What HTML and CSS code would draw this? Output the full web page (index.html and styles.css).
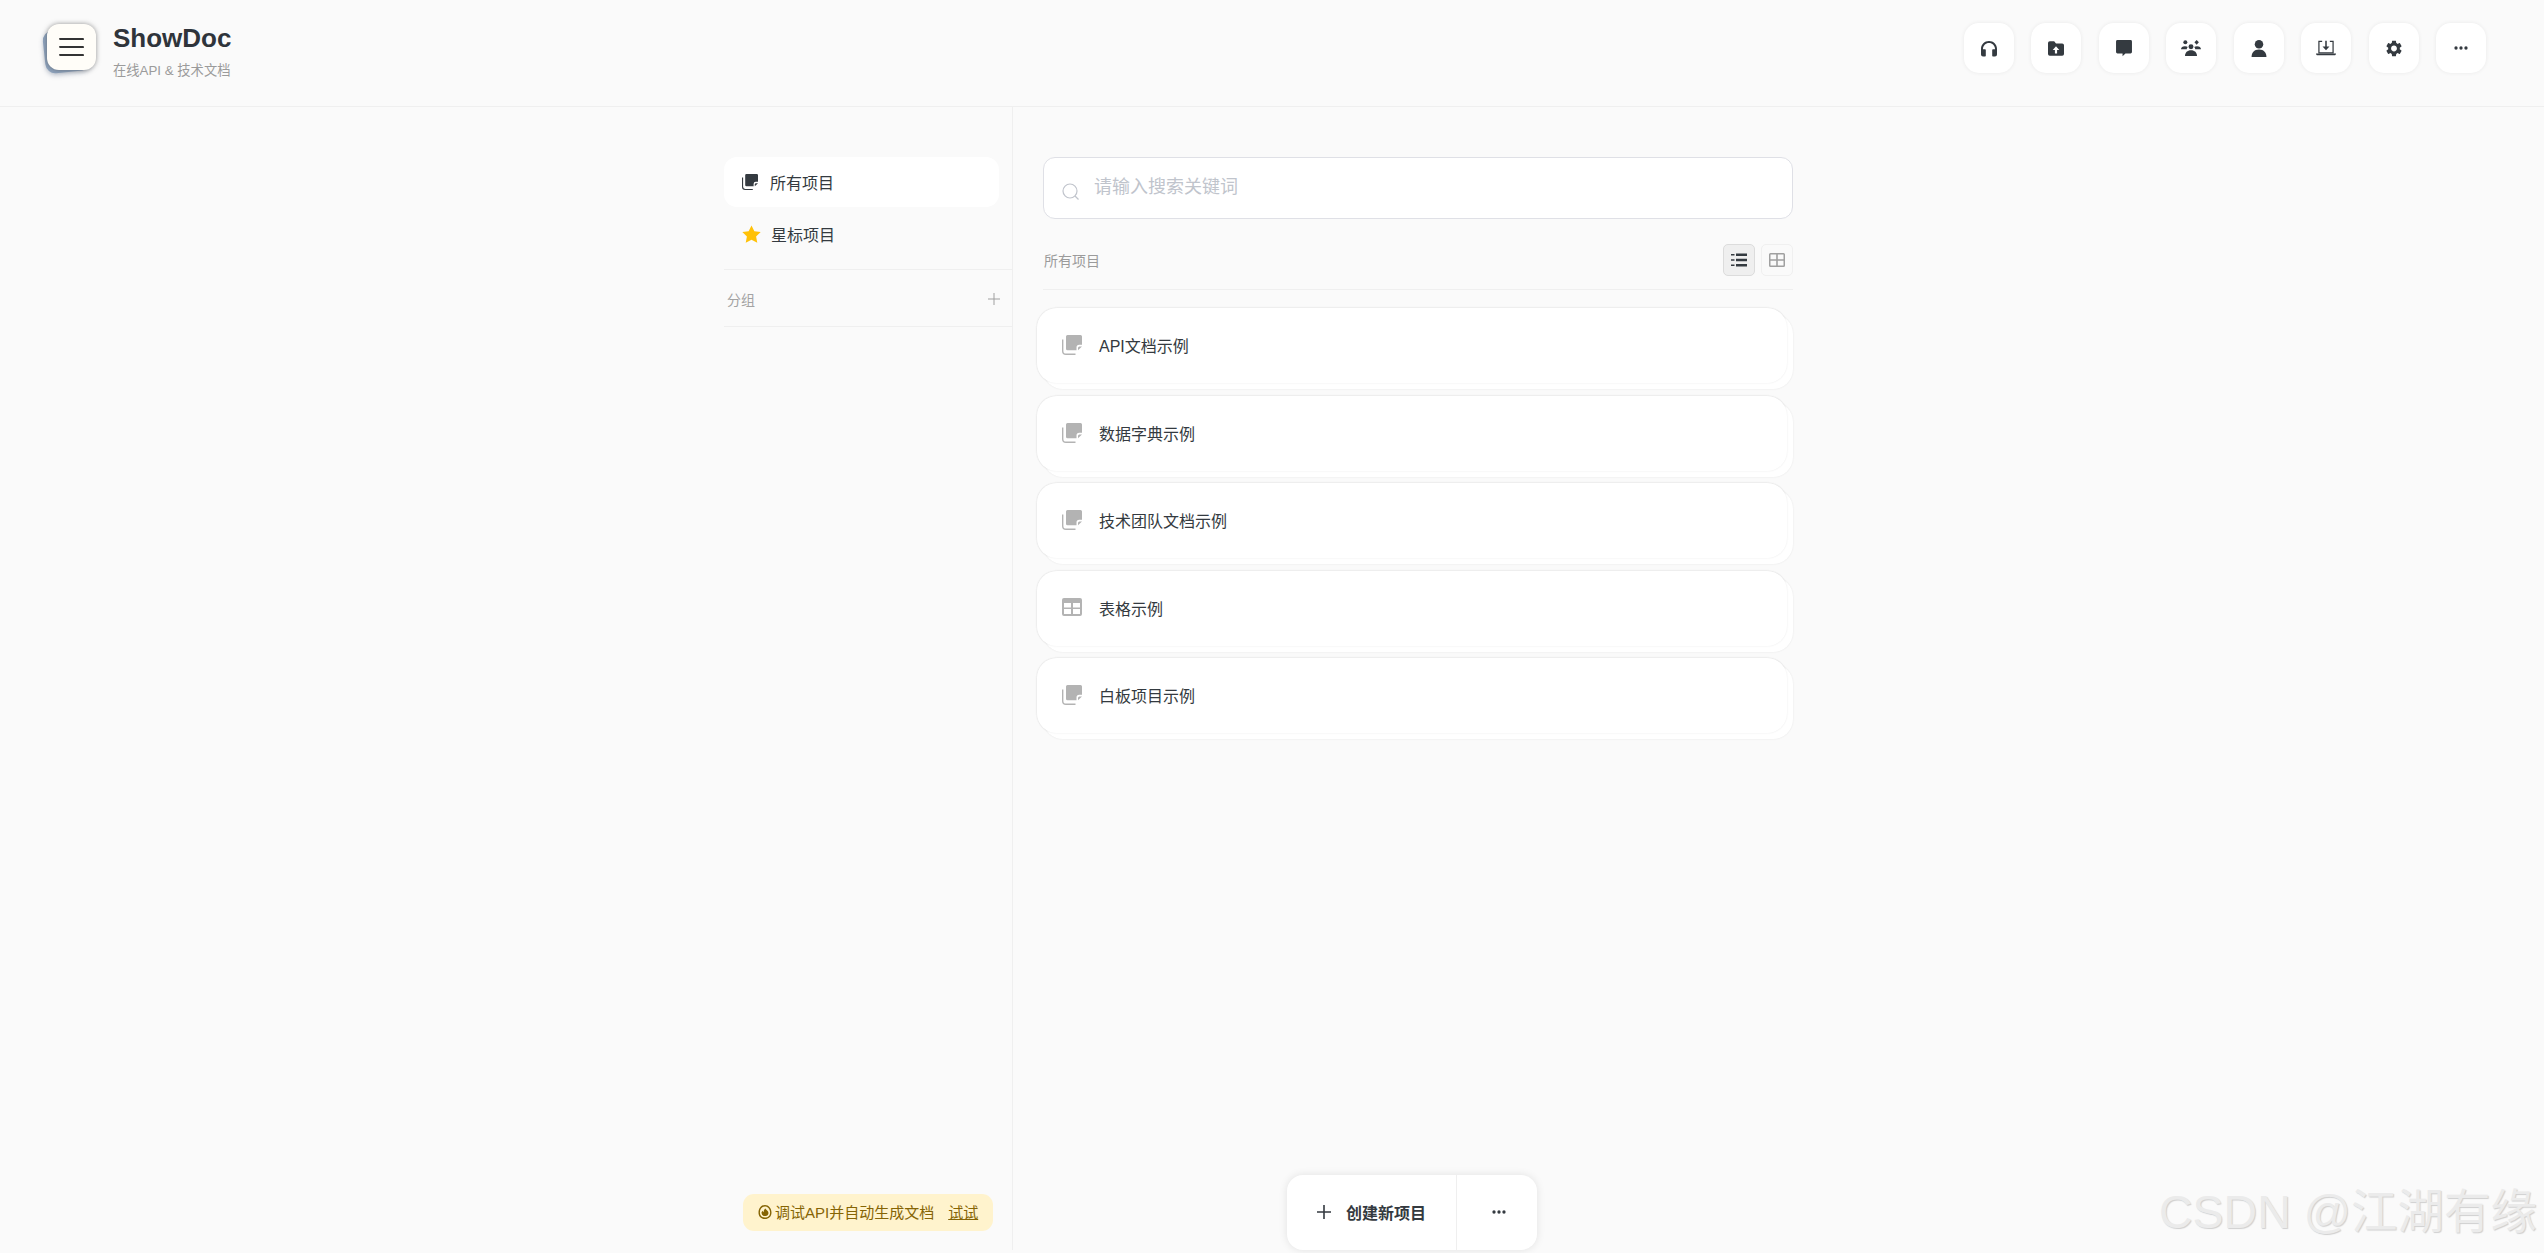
FILE: index.html
```html
<!DOCTYPE html>
<html lang="zh-CN">
<head>
<meta charset="utf-8">
<title>ShowDoc</title>
<link rel="stylesheet" href="styles.css">
</head>
<body>
<svg class="defs" width="0" height="0" aria-hidden="true">
  <symbol id="i-stack" viewBox="0 0 20 20">
    <path d="M5.500 0H18.500A1.500 1.500 0 0 1 20 1.500V9.800h-2.800A2.700 2.700 0 0 0 14.500 12.500V15.300H5.500A1.500 1.500 0 0 1 4 13.800V1.500A1.500 1.500 0 0 1 5.500 0z"/>
    <path d="M16 15.300v-2.300a1.500 1.500 0 0 1 1.500-1.500H20z"/>
    <path d="M0 4.500h1.400v11.500A2.600 2.600 0 0 0 4 18.600h9.500V20H4A4 4 0 0 1 0 16z"/>
  </symbol>
  <symbol id="i-table" viewBox="0 0 20 18">
    <path fill-rule="evenodd" d="M2 0h16a2 2 0 0 1 2 2v14a2 2 0 0 1-2 2H2a2 2 0 0 1-2-2V2a2 2 0 0 1 2-2zM2 5v4.500h7V5zm9 0v4.500h7V5zM2 11v5h7v-5zm9 0v5h7v-5z"/>
  </symbol>
  <symbol id="i-more" viewBox="0 0 16 4">
    <circle cx="2.300" cy="2" r="1.900"/><circle cx="8" cy="2" r="1.900"/><circle cx="13.700" cy="2" r="1.900"/>
  </symbol>
</svg>

<header class="topbar">
  <div class="brand">
    <div class="logo">
      <span class="logo-back"></span>
      <span class="logo-front"><i></i><i></i><i></i></span>
    </div>
    <div class="brand-text">
      <div class="brand-name">ShowDoc</div>
      <div class="brand-sub">在线API &amp; 技术文档</div>
    </div>
  </div>
  <nav class="tools">
    <button class="tool"><svg class="ti" viewBox="2 2 20 20"><path d="M12 2.500C6.400 2.500 2 6.900 2 12.500v7a2.500 2.500 0 0 0 2.500 2.500H7a1 1 0 0 0 1-1v-7a1 1 0 0 0-1-1H4.500v-.5C4.500 8.300 7.800 5 12 5s7.500 3.300 7.500 7.500v.5H17a1 1 0 0 0-1 1v7a1 1 0 0 0 1 1h2.500a2.500 2.500 0 0 0 2.500-2.500v-7c0-5.600-4.400-10-10-10z"/></svg></button>
    <button class="tool"><svg class="ti" viewBox="1 2 22 20"><path fill-rule="evenodd" d="M3.500 2h6l2.500 3h8.500A2.500 2.500 0 0 1 23 7.500v12a2.500 2.500 0 0 1-2.500 2.500h-17A2.500 2.500 0 0 1 1 19.500v-15A2.500 2.500 0 0 1 3.500 2zM12 9L7.500 14h3v5h3v-5h3z"/></svg></button>
    <button class="tool"><svg class="ti" viewBox="1 1 22 23.500"><path d="M3 1h18a2 2 0 0 1 2 2v14.500a2 2 0 0 1-2 2h-7l-4 4v-4H3a2 2 0 0 1-2-2V3a2 2 0 0 1 2-2z"/></svg></button>
    <button class="tool"><svg class="ti ti-wide" viewBox="0 0 30 24"><circle cx="6.500" cy="3.500" r="3"/><path d="M0 14c.3-2.500 2-4.500 6-4.500 1.800 0 3.200.4 4.200 1.100-1 .8-1.500 2-1.600 3.400z"/><path d="M23.500 0l3.300 3.500-3.300 3.500-3.300-3.500z"/><path d="M30 14c-.3-2.500-2-4.500-6-4.500-1.800 0-3.200.4-4.200 1.100 1 .8 1.500 2 1.600 3.400z"/><circle cx="15" cy="10" r="3.700"/><path d="M6 24c0-5 3.500-8.500 9-8.500s9 3.500 9 8.500z"/></svg></button>
    <button class="tool"><svg class="ti" viewBox="0 0 14 16"><circle cx="7" cy="4" r="4"/><path d="M0 16c0-4 2.300-7 7-7s7 3 7 7z"/></svg></button>
    <button class="tool"><svg class="ti ti-wide" viewBox="0 0 26 19"><path d="M3 0h5v1.600H4.600V15H21.400V1.600H18V0h5v16.500H3z"/><path d="M12 0h2v7.500h3.500L13 12.500 8.500 7.500H12z"/><path d="M0 16.500h26c0 1.400-.8 2.500-2 2.500H2c-1.200 0-2-1.100-2-2.500z"/></svg></button>
    <button class="tool"><svg class="ti" viewBox="2.500 1.500 19 21"><path d="M19.140 12.940c.04-.3.06-.61.06-.94 0-.32-.02-.64-.07-.94l2.030-1.580c.18-.14.23-.41.12-.61l-1.920-3.320c-.12-.22-.37-.29-.59-.22l-2.390.96c-.5-.38-1.030-.7-1.620-.94l-.36-2.540c-.04-.24-.24-.41-.48-.41h-3.840c-.24 0-.43.17-.47.41l-.36 2.540c-.59.24-1.130.57-1.620.94l-2.390-.96c-.22-.08-.47 0-.59.22L2.740 8.870c-.12.21-.08.47.12.61l2.030 1.580c-.05.3-.09.63-.09.94s.02.64.07.94l-2.030 1.580c-.18.14-.23.41-.12.61l1.920 3.320c.12.22.37.29.59.22l2.390-.96c.5.38 1.030.7 1.620.94l.36 2.540c.05.24.24.41.48.41h3.840c.24 0 .44-.17.47-.41l.36-2.540c.59-.24 1.130-.56 1.620-.94l2.390.96c.22.08.47 0 .59-.22l1.920-3.320c.12-.22.07-.47-.12-.61l-2.010-1.580zM12 15.600c-1.980 0-3.600-1.620-3.600-3.600s1.620-3.600 3.600-3.600 3.600 1.620 3.600 3.600-1.620 3.600-3.600 3.600z"/></svg></button>
    <button class="tool"><svg class="ti-more"><use href="#i-more"/></svg></button>
  </nav>
</header>

<div class="page">
  <aside class="side">
    <a class="side-item active"><svg class="side-icon"><use href="#i-stack"/></svg><span>所有项目</span></a>
    <a class="side-item"><svg class="side-icon star" viewBox="0 0 24 24"><path d="M12 .5l3.600 7.300 8 1.100-5.800 5.600 1.500 8L12 18.700l-7.300 3.800 1.500-8L.4 8.900l8-1.100z"/></svg><span>星标项目</span></a>
    <div class="group-head">
      <span>分组</span>
      <svg class="plus" viewBox="0 0 12 12"><path d="M5.500 0h1v5.500H12v1H6.500V12h-1V6.500H0v-1h5.500z"/></svg>
    </div>
    <div class="tip">
      <svg class="tip-icon" viewBox="0 0 14 16"><path fill-rule="evenodd" d="M7 1c3.600 0 6.500 3.200 6.500 7.500S10.600 15 7 15 .5 12.800.5 8.500 3.400 1 7 1zm0 1.400c-2.900 0-5.100 2.600-5.100 6.100s2.200 5.100 5.100 5.100 5.100-1.600 5.100-5.100S9.900 2.400 7 2.400z"/><path d="M7.500 4.500c.4 1.500 3 2.300 3 4.600A3.200 3.200 0 0 1 7 12a3.200 3.200 0 0 1-3.500-2.900c0-1 .6-1.800 1.200-2.300.1.800.4 1.200 1 1.400-.2-1.400.6-3 1.800-3.700z"/></svg>
      <span>调试API并自动生成文档</span>
      <a class="tip-link">试试</a>
    </div>
  </aside>

  <main class="main">
    <label class="search">
      <svg class="search-icon" viewBox="0 0 18 18"><circle cx="8" cy="8" r="7" fill="none" stroke="currentColor" stroke-width="1.200"/><path d="M13 13l3.500 3.500" stroke="currentColor" stroke-width="1.200"/></svg>
      <input class="search-input" type="text" placeholder="请输入搜索关键词">
    </label>
    <div class="list-head">
      <span>所有项目</span>
      <div class="views">
        <button class="view on"><svg class="view-icon" viewBox="0 0 16 14"><path d="M0 1h3.500v1.600H0zM0 6.200h3.500v1.600H0zM0 11.400h3.500V13H0zM5 .6h11v2.400H5zM5 5.800h11v2.400H5zM5 11h11v2.400H5z"/></svg></button>
        <button class="view"><svg class="view-icon" viewBox="0 0 16 14"><path fill-rule="evenodd" d="M1.500 0h13A1.500 1.500 0 0 1 16 1.500v11a1.500 1.500 0 0 1-1.500 1.500h-13A1.500 1.500 0 0 1 0 12.500v-11A1.500 1.500 0 0 1 1.500 0zm0 1.500v4.700h5.700V1.500zm7.300 0v4.700h5.700V1.500zM1.500 7.800v4.700h5.700V7.800zm7.300 0v4.700h5.700V7.800z"/></svg></button>
      </div>
    </div>
    <div class="cards">
      <a class="card"><svg class="card-icon"><use href="#i-stack"/></svg><span>API文档示例</span></a>
      <a class="card"><svg class="card-icon"><use href="#i-stack"/></svg><span>数据字典示例</span></a>
      <a class="card"><svg class="card-icon"><use href="#i-stack"/></svg><span>技术团队文档示例</span></a>
      <a class="card"><svg class="card-icon card-icon-table"><use href="#i-table"/></svg><span>表格示例</span></a>
      <a class="card"><svg class="card-icon"><use href="#i-stack"/></svg><span>白板项目示例</span></a>
    </div>
    <div class="fab">
      <button class="fab-new"><svg class="fab-plus" viewBox="0 0 14 14"><path d="M6.200 0h1.600v6.200H14v1.600H7.800V14H6.200V7.800H0V6.200h6.200z"/></svg><span>创建新项目</span></button>
      <button class="fab-more"><svg class="ti-more"><use href="#i-more"/></svg></button>
    </div>
  </main>
</div>

<div class="watermark">CSDN @江湖有缘</div>
</body>
</html>
```
FILE: styles.css
```css
* { box-sizing: border-box; }
html, body { height: 100%; }
body {
  margin: 0;
  height: 1253px;
  overflow: hidden;
  background: #fafafa;
  color: #343a40;
  font-family: "Liberation Sans", "Noto Sans CJK SC", sans-serif;
  font-size: 16px;
}
.defs { position: absolute; }
button { border: 0; padding: 0; background: none; font: inherit; color: inherit; }

.topbar {
  height: 107px;
  border-bottom: 1px solid #efefef;
  display: flex;
  align-items: flex-start;
  justify-content: space-between;
  padding: 23px 58px 0 47px;
}
.brand { display: flex; gap: 18px; }
.logo { position: relative; width: 48px; height: 48px; }
.logo-back {
  position: absolute; left: -3px; top: 6px; width: 46px; height: 43px;
  border-radius: 10px; background: #8ea3bd; transform: rotate(-6deg);
  box-shadow: 0 2px 5px rgba(70, 90, 120, .35);
}
.logo-front {
  position: absolute; left: 0; top: 1px; width: 49px; height: 46px;
  border-radius: 12px; background: #fffdf8;
  box-shadow: 0 0 5px rgba(60, 60, 60, .55);
  display: flex; flex-direction: column; justify-content: center; align-items: center; gap: 6px;
}
.logo-front i { display: block; width: 25px; height: 2px; border-radius: 1px; background: #333; transform: rotate(.6deg); }
.brand-name { font-size: 26px; font-weight: 700; line-height: 30px; color: #2f343b; }
.brand-sub { font-size: 13.300px; line-height: 20px; color: #9b9b9b; margin-top: 8px; }

.tools { display: flex; gap: 17.500px; }
.tool {
  width: 50px; height: 50px; border-radius: 15px; background: #fff;
  box-shadow: 0 0 4px rgba(0, 0, 0, .07);
  display: flex; align-items: center; justify-content: center;
}
.ti { width: 16px; height: 17px; fill: #343a40; }
.ti-wide { width: 20px; height: 16px; }
.ti-more { width: 14px; height: 4px; fill: #343a40; }

.page {
  width: 1096px;
  margin: 0 auto;
  height: 1146px;
  display: flex;
}
.side {
  width: 289px;
  height: 1143px;
  border-right: 1px solid #efefef;
  padding-top: 50px;
  display: flex;
  flex-direction: column;
}
.side-item {
  width: 275px; height: 50px; border-radius: 13px;
  display: flex; align-items: center; padding-left: 18px; gap: 12px;
  font-size: 16px; color: #343a40;
  margin-bottom: 2px;
}
.side-item.active { background: #fff; }
.side-icon { width: 16px; height: 16px; fill: #343a40; }
.star { width: 19px; height: 19px; fill: #ffc107; margin-right: -2px; }
.group-head {
  margin-top: 8px;
  height: 58px;
  border-top: 1px solid #efefef;
  border-bottom: 1px solid #efefef;
  display: flex; align-items: center; justify-content: space-between;
  padding: 2px 12px 0 3px;
  font-size: 14px; color: #a3a3a3;
}
.plus { width: 12px; height: 12px; fill: #a0a0a0; }
.tip {
  margin: auto 0 19px 19px;
  width: 250px; height: 37px; border-radius: 11px; background: #fff3cd;
  color: #856404; font-size: 15px;
  display: flex; align-items: center; padding: 0 0 2px 15px; gap: 3px;
}
.tip-icon { width: 14px; height: 16px; fill: currentColor; flex: none; }
.tip-link { margin-left: 11px; text-decoration: underline; }

.main { width: 807px; padding-left: 30px; position: relative; }
.search {
  margin-top: 50px;
  width: 750px; height: 62px;
  background: #fff; border: 1px solid #dfe0e6; border-radius: 12px;
  display: flex; align-items: center; padding-left: 18px; gap: 14px;
}
.search-icon { width: 18px; height: 18px; color: #c0c4cc; margin-top: 8px; flex: none; }
.search-input {
  flex: 1; border: 0; outline: 0; background: none; height: 40px; padding: 0;
  margin-top: -2px; font: inherit; font-size: 18px;
}
.search-input::placeholder { color: #c0c4cc; opacity: 1; }
.list-head {
  width: 750px; height: 71px;
  border-bottom: 1px solid #efefef;
  display: flex; align-items: center; justify-content: space-between;
  padding: 12px 0 0 1px;
  font-size: 14px; color: #9b9b9b;
}
.views { display: flex; gap: 6px; }
.view {
  width: 32px; height: 32px; border-radius: 5px; border: 1px solid #f0f0f0; background: #fafafa;
  display: flex; align-items: center; justify-content: center; color: #a0a0a0;
}
.view.on { background: #efefef; border-color: #dcdcdc; color: #343a40; }
.view-icon { width: 16px; height: 14px; fill: currentColor; }
.cards { margin: 18px 0 0 -6px; display: flex; flex-direction: column; gap: 12.500px; }
.card {
  position: relative; z-index: 0;
  width: 750px; height: 75px;
  background: #fff; border-radius: 20px;
  box-shadow: 0 0 2px rgba(0, 0, 0, .09);
  display: flex; align-items: center; padding-left: 25px; gap: 17px;
  font-size: 16px; color: #343a40;
  padding-bottom: 1px;
}
.card::after {
  content: ""; position: absolute; z-index: -2;
  left: 6px; right: -6px; top: 6px; bottom: -6px;
  background: #fff; border-radius: 20px;
  box-shadow: 0 0 2px rgba(0, 0, 0, .09);
}
.card::before {
  content: ""; position: absolute; inset: 0; z-index: -1;
  background: #fff; border-radius: 20px;
  box-shadow: 0 0 2px rgba(0, 0, 0, .09);
}
.card-icon { width: 20px; height: 20px; fill: #b3b3b3; flex: none; }
.card-icon-table { height: 18px; margin-top: -2px; }
.fab {
  position: absolute; left: 274px; top: 1068px;
  width: 250px; height: 75px; border-radius: 16px; background: #fff;
  box-shadow: 0 0 8px rgba(0, 0, 0, .1);
  display: flex;
}
.fab-new {
  width: 170px; border-right: 1px solid #efefef;
  display: flex; align-items: center; padding: 0 0 2px 30px; gap: 15px;
  font-size: 16px; font-weight: 700;
}
.fab-plus { width: 14px; height: 14px; fill: #343a40; }
.fab-more { flex: 1; display: flex; align-items: center; justify-content: center; padding: 0 0 2px 3px; }

.watermark {
  position: absolute; left: 2159px; top: 1183px;
  font-family: "Liberation Sans", "Noto Sans CJK SC", sans-serif;
  font-size: 46.500px; line-height: 58px; white-space: nowrap;
  color: #ebebeb;
  text-shadow: 1px 1px 1px #cfcfcf;
}
```
